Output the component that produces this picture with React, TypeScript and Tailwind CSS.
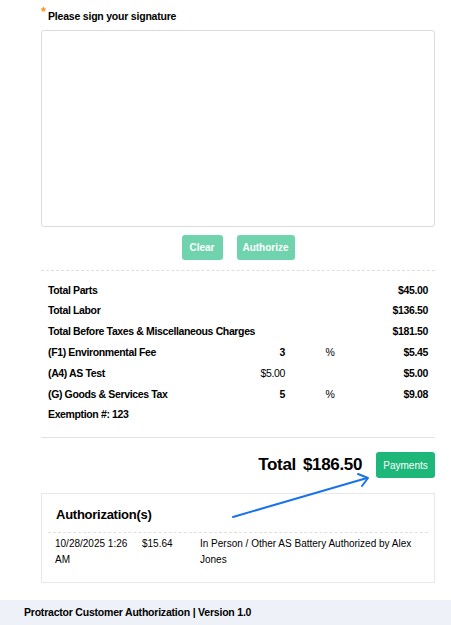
const rows = [
  { label: "Total Parts", value: "$45.00" },
  { label: "Total Labor", value: "$136.50" },
  { label: "Total Before Taxes & Miscellaneous Charges", value: "$181.50" },
  { label: "(F1) Environmental Fee", mid: "3", pct: "%", value: "$5.45" },
  { label: "(A4) AS Test", mid: "$5.00", value: "$5.00", light: true },
  { label: "(G) Goods & Services Tax", mid: "5", pct: "%", value: "$9.08" },
];

export default function App() {
  return (
    <div className="relative min-h-[625px] w-[451px] bg-white font-['Liberation_Sans',Arial,sans-serif] text-black">
      <main className="pl-[41px] pr-[16px] pt-[6px]">
        <div className="flex items-start gap-[2px] h-[24px]">
          <span className="text-[13px] leading-[12px] font-bold text-[#f7941d]">*</span>
          <span className="mt-[4px] text-[10.5px] font-bold tracking-[-0.02em] leading-[12px]">Please sign your signature</span>
        </div>

        <div className="h-[197px] rounded-[3px] border border-[#dcdcdc]" />

        <div className="mt-[8px] flex justify-center gap-[14px]">
          <button className="h-[25px] w-[41px] rounded-[3px] bg-[#6fd3ad] text-[10px] font-bold text-white">Clear</button>
          <button className="h-[25px] w-[58px] rounded-[3px] bg-[#6fd3ad] text-[10px] font-bold text-white">Authorize</button>
        </div>

        <div className="mt-[10px] border-t border-dashed border-[#dedede]" />

        <div className="px-[7px] pt-[9px] pb-[11px] text-[10.5px] font-bold tracking-[-0.035em]">
          {rows.map((r) => (
            <div key={r.label} className="grid h-[20.8px] grid-cols-[177px_60px_90px_1fr] items-center">
              {r.mid ? (
                <>
                  <span>{r.label}</span>
                  <span className={r.light ? "text-right font-normal" : "text-right"}>{r.mid}</span>
                  <span className="text-center font-normal">{r.pct}</span>
                </>
              ) : (
                <span className="col-span-3 whitespace-nowrap">{r.label}</span>
              )}
              <span className="text-right">{r.value}</span>
            </div>
          ))}
          <div className="flex h-[20.8px] items-center">Exemption #: 123</div>
        </div>

        <div className="border-t border-[#e2e2e2]" />

        <div className="flex h-[55px] items-center justify-end gap-[14px]">
          <div className="flex items-baseline gap-[7px] text-[17px] font-bold tracking-[-0.02em]">
            <span>Total</span>
            <span>$186.50</span>
          </div>
          <button className="h-[26px] w-[59px] rounded-[3px] bg-[#1db77a] text-[10px] text-white">Payments</button>
        </div>

        <section className="border border-[#e8e8e8] px-[6px] pb-[14px]">
          <h2 className="flex h-[38px] items-end pb-[7px] pl-[8px] text-[13px] font-bold tracking-[-0.02em]">Authorization(s)</h2>
          <div className="border-t border-dashed border-[#e0e0e0]" />
          <div className="flex pt-[3px] text-[10px] leading-[16px]">
            <div className="w-[94px] pl-[7px]">10/28/2025 1:26 AM</div>
            <div className="w-[58px]">$15.64</div>
            <div className="flex-1 pr-[4px]">In Person / Other AS Battery Authorized by Alex Jones</div>
          </div>
        </section>
      </main>

      <footer className="mt-[17px] flex h-[27px] items-center bg-[#eef2f8] pl-[24px] text-[10.5px] font-bold tracking-[-0.02em]">
        Protractor Customer Authorization | Version 1.0
      </footer>

      <svg className="pointer-events-none absolute left-0 top-0" width="451" height="625">
        <line x1="233" y1="517" x2="367" y2="478" stroke="#1a73e8" strokeWidth="2" strokeLinecap="round" />
        <polyline points="358,474 368,478 362,486" fill="none" stroke="#1a73e8" strokeWidth="2" strokeLinecap="round" strokeLinejoin="round" />
      </svg>
    </div>
  );
}
